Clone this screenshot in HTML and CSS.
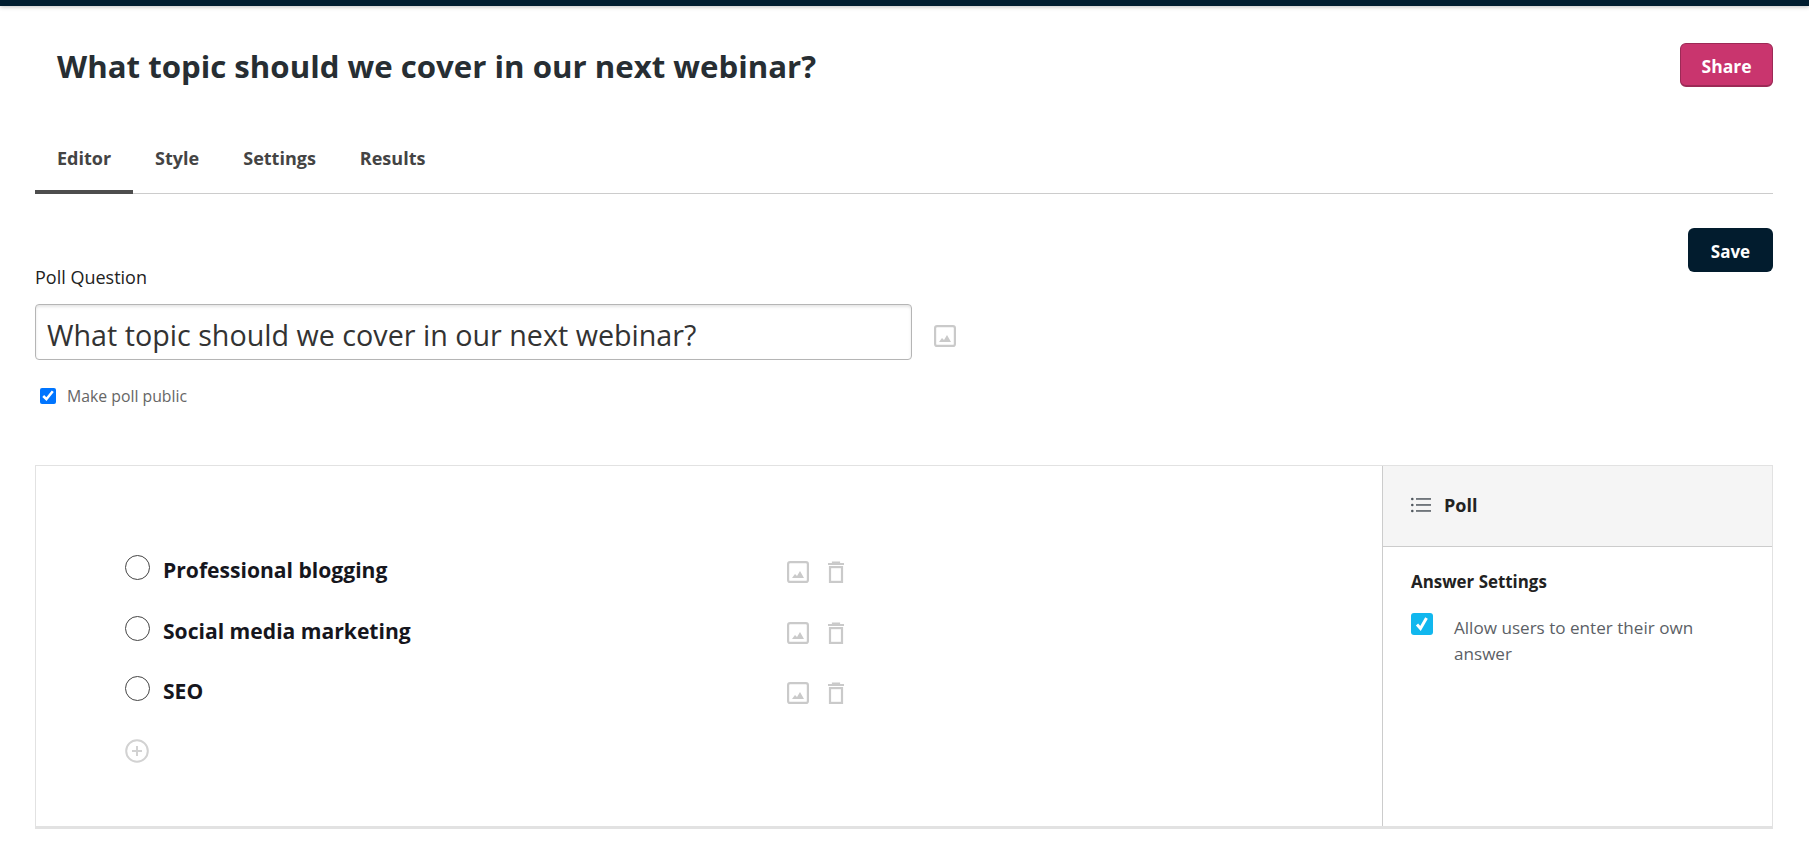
FILE: index.html
```html
<!DOCTYPE html>
<html lang="en">
<head>
  <meta charset="UTF-8">
  <title>Poll Editor</title>
  <link rel="stylesheet" href="styles.css">
</head>
<body>

<div class="topbar"></div>

<div class="page">
  <div class="head">
    <h1>What topic should we cover in our next webinar?</h1>
    <button class="btn btn-share">Share</button>
  </div>

  <div class="tabs">
    <a class="tab active">Editor</a>
    <a class="tab">Style</a>
    <a class="tab">Settings</a>
    <a class="tab">Results</a>
  </div>

  <div class="save-row">
    <button class="btn btn-save">Save</button>
  </div>

  <label class="q-label">Poll Question</label>
  <div class="q-row">
    <input class="q-input" type="text" value="What topic should we cover in our next webinar?">
    <svg class="ico q-ico" viewBox="0 0 22 22"><use href="#i-image"/></svg>
  </div>
  <label class="public">
    <input type="checkbox" checked>
    <span>Make poll public</span>
  </label>

  <!-- Poll block -->
  <div class="panel">
    <div class="answers">
      <div class="answer">
        <span class="radio"></span>
        <span class="answer-text">Professional blogging</span>
        <div class="answer-tools">
          <svg class="ico" viewBox="0 0 22 22"><use href="#i-image"/></svg>
          <svg class="ico ico-trash" viewBox="0 0 18 22"><use href="#i-trash"/></svg>
        </div>
      </div>
      <div class="answer">
        <span class="radio"></span>
        <span class="answer-text">Social media marketing</span>
        <div class="answer-tools">
          <svg class="ico" viewBox="0 0 22 22"><use href="#i-image"/></svg>
          <svg class="ico ico-trash" viewBox="0 0 18 22"><use href="#i-trash"/></svg>
        </div>
      </div>
      <div class="answer">
        <span class="radio"></span>
        <span class="answer-text">SEO</span>
        <div class="answer-tools">
          <svg class="ico" viewBox="0 0 22 22"><use href="#i-image"/></svg>
          <svg class="ico ico-trash" viewBox="0 0 18 22"><use href="#i-trash"/></svg>
        </div>
      </div>
      <svg class="add" viewBox="0 0 24 24" fill="none" stroke="#d2d2d2">
        <circle cx="12" cy="12" r="10.8" stroke-width="2"/>
        <path d="M12 7v10M7 12h10" stroke-width="2"/>
      </svg>
    </div>

    <div class="side">
      <div class="side-head">
        <svg class="list-ico" viewBox="0 0 20 16" fill="#50575e">
          <circle cx="1.3" cy="2" r="1.3"/><circle cx="1.3" cy="8" r="1.3"/><circle cx="1.3" cy="14" r="1.3"/>
          <rect x="5" y="1.2" width="15" height="1.5"/><rect x="5" y="7.2" width="15" height="1.5"/><rect x="5" y="13.2" width="15" height="1.5"/>
        </svg>
        <span>Poll</span>
      </div>
      <div class="side-body">
        <h3>Answer Settings</h3>
        <div class="allow">
          <span class="check">
            <svg viewBox="0 0 22 22" fill="none" stroke="#fff" stroke-width="3"><path d="M6 11.5l3.5 4L15.5 5"/></svg>
          </span>
          <span class="allow-text">Allow users to enter their own answer</span>
        </div>
      </div>
    </div>
  </div>
</div>

<svg class="defs" width="0" height="0">
  <symbol id="i-image" viewBox="0 0 22 22">
    <rect x="1.1" y="1.1" width="19.8" height="19.8" rx="2" fill="none" stroke="#cacaca" stroke-width="2.2"/>
    <path d="M5 17l3-4 2 2 3-5 4 7z" fill="#cacaca"/>
  </symbol>
  <symbol id="i-trash" viewBox="0 0 18 22">
    <path d="M1 3h16M6 3V1.5h6V3" fill="none" stroke="#cacaca" stroke-width="2.2"/>
    <rect x="3" y="6.1" width="12" height="14.8" fill="none" stroke="#cacaca" stroke-width="2.2"/>
  </symbol>
</svg>

</body>
</html>
```

FILE: styles.css
```css
* {
  box-sizing: border-box;
}
body {
  margin: 0;
  font-family: "Open Sans", sans-serif;
  color: #333;
  background: #fff;
}
.topbar {
  height: 6px;
  background: #001d30;
  box-shadow: 0 1px 4px rgba(0, 0, 0, 0.25);
}
.page {
  padding: 0 36px 0 35px;
}
.head {
  display: flex;
  justify-content: space-between;
  align-items: center;
  height: 44px;
  margin-top: 37px;
}
h1 {
  margin: 2px 0 0 22px;
  font-size: 31.2px;
  font-weight: 700;
  color: #272e33;
}
.btn {
  height: 44px;
  padding: 2px 0 0;
  border: 0;
  border-radius: 6px;
  color: #fff;
  font-family: inherit;
  font-size: 17.5px;
  font-weight: 700;
}
.btn-share {
  width: 93px;
  padding-top: 3px;
  background: #c9356e;
  border: 1px solid #9c2a56;
  border-bottom-width: 2px;
}
.btn-save {
  width: 85px;
  font-size: 17px;
  background: #021c2e;
}
.tabs {
  display: flex;
  height: 64px;
  margin-top: 43px;
  border-bottom: 1px solid #ccc;
}
.tab {
  padding: 16px 22px 0;
  font-size: 18px;
  font-weight: 700;
  color: #444;
}
.tab.active {
  border-bottom: 4px solid #4d4d4d;
  height: 64px;
}
.save-row {
  display: flex;
  justify-content: flex-end;
  margin-top: 34px;
}
.q-label {
  display: block;
  margin-top: -6px;
  font-size: 18px;
  line-height: 22px;
  color: #222;
}
.q-row {
  display: flex;
  align-items: center;
  margin-top: 16px;
}
.q-input {
  width: 877px;
  height: 56px;
  padding: 5px 11px 0;
  border: 1px solid #b5b5b5;
  border-radius: 4px;
  box-shadow: inset 0 2px 3px rgba(0, 0, 0, 0.1);
  font-family: inherit;
  font-size: 28.7px;
  color: #333;
}
.ico {
  width: 22px;
  height: 22px;
  display: block;
}
.q-ico {
  margin: 8px 0 0 22px;
}
.public {
  display: flex;
  align-items: center;
  margin-top: 26px;
  margin-left: 5px;
  font-size: 15.8px;
  line-height: 20px;
  color: #666;
}
.public input {
  width: 16px;
  height: 16px;
  margin: 0 11px 0 0;
}
.panel {
  display: flex;
  height: 364px;
  margin-top: 59px;
  border: 1px solid #e2e2e2;
  border-bottom-width: 3px;
}
.answers {
  flex: 1;
  padding: 89px 0 0 89px;
  border-right: 1px solid #ccc;
}
.answer {
  display: flex;
  align-items: center;
  height: 25px;
  margin-bottom: 35.5px;
}
.radio {
  width: 25px;
  height: 25px;
  border: 1px solid #444;
  border-radius: 50%;
}
.answer-text {
  width: 624px;
  margin: 4px 0 0 13px;
  font-size: 21.1px;
  font-weight: 700;
  color: #16161d;
}
.answer-tools {
  display: flex;
  gap: 18px;
  margin-top: 9px;
}
.ico-trash {
  width: 18px;
}
.add {
  display: block;
  width: 24px;
  height: 24px;
  margin-top: 38px;
}
.side {
  width: 389px;
}
.side-head {
  display: flex;
  align-items: center;
  height: 81px;
  padding: 0 0 2px 28px;
  background: #f5f5f5;
  border-bottom: 1px solid #ccc;
  font-size: 18px;
  font-weight: 700;
  color: #222;
}
.list-ico {
  width: 20px;
  height: 16px;
  margin-right: 13px;
}
.side-body {
  padding: 24px 28px;
}
h3 {
  margin: 0;
  font-size: 16.9px;
  line-height: 22px;
  font-weight: 700;
  color: #222;
}
.allow {
  display: flex;
  margin-top: 20px;
}
.check {
  flex: none;
  width: 22px;
  height: 22px;
  border-radius: 3px;
  background: #11b7ee;
}
.check svg {
  display: block;
}
.allow-text {
  margin: 2px 0 0 21px;
  font-size: 17.1px;
  line-height: 26px;
  color: #5c5f66;
}
.defs {
  position: absolute;
}
```
